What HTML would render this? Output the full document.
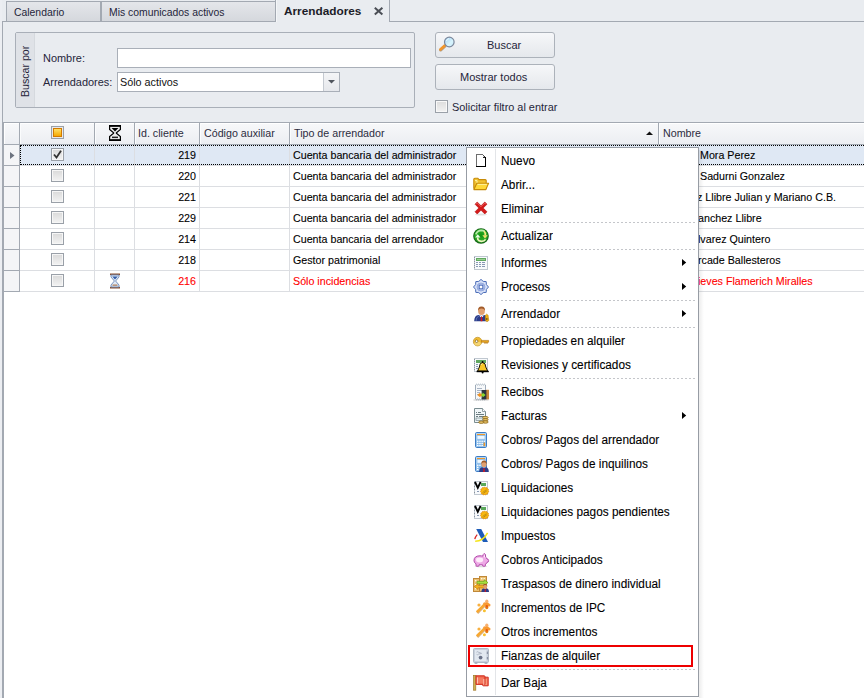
<!DOCTYPE html>
<html><head><meta charset="utf-8">
<style>
*{box-sizing:border-box;margin:0;padding:0}
html,body{width:864px;height:698px;overflow:hidden}
body{background:#e9ecf0;font-family:"Liberation Sans",sans-serif;font-size:11px;color:#1e1e1e;position:relative}
.a{position:absolute}
.t{position:absolute;white-space:nowrap;line-height:13px}
.h{position:absolute;white-space:nowrap;line-height:13px;font-size:10.7px;color:#2c2c40}
.g{position:absolute;white-space:nowrap;line-height:13px;font-size:10.7px;color:#000;-webkit-text-stroke:0.1px currentColor}
.m{position:absolute;white-space:nowrap;line-height:14px;font-size:12.3px;transform:scaleX(.96);transform-origin:0 0;color:#000;left:501px;-webkit-text-stroke:0.1px #000}
svg{position:absolute;overflow:visible}
</style></head><body>

<div class="a" style="left:0;top:0;width:2px;height:698px;background:#eceef2"></div>
<div class="a" style="left:6px;top:1px;width:95px;height:21px;border:1px solid #a3a9b2;background:linear-gradient(#e4e6ea,#d5d8dd)"></div>
<div class="a" style="left:101px;top:1px;width:175px;height:21px;border:1px solid #a3a9b2;background:linear-gradient(#e4e6ea,#d5d8dd)"></div>
<div class="a" style="left:275px;top:-1px;width:115px;height:23px;border:1px solid #a3a9b2;border-bottom:none;background:#e9ecf0;box-shadow:inset 1px 0 0 #f4f6f8"></div>
<div class="t" style="left:14px;top:6px;font-size:10.4px;color:#25253a">Calendario</div>
<div class="t" style="left:109px;top:6px;font-size:10.4px;color:#25253a">Mis comunicados activos</div>
<div class="t" style="left:284px;top:5px;font-size:11.8px;font-weight:bold;color:#1c1c28">Arrendadores</div>
<svg style="left:374px;top:7px" width="10" height="9" viewBox="0 0 10 9"><path d="M0.8 0.8 L8.4 7.6 M8.4 0.8 L0.8 7.6" stroke="#4a4e55" stroke-width="2"/></svg>
<div class="a" style="left:2px;top:21px;width:1px;height:677px;background:#a3a9b2"></div>
<div class="a" style="left:2px;top:21px;width:274px;height:1px;background:#a3a9b2"></div>
<div class="a" style="left:389px;top:21px;width:475px;height:1px;background:#a3a9b2"></div>
<div class="a" style="left:15px;top:32px;width:400px;height:76px;border:1px solid #a9afb8;border-radius:2px"></div>
<div class="a" style="left:16px;top:33px;width:19px;height:74px;background:#dfe2e7;border-right:1px solid #d5d9de"></div>
<div class="t" style="left:19px;top:97px;font-size:10.6px;transform-origin:0 0;transform:rotate(-90deg);color:#25253a">Buscar por</div>
<div class="t" style="left:43px;top:52px;font-size:10.95px;color:#25253a">Nombre:</div>
<div class="t" style="left:43px;top:76px;font-size:10.95px;color:#25253a">Arrendadores:</div>
<div class="a" style="left:117px;top:48px;width:294px;height:20px;border:1px solid #a9afb8;background:#fff"></div>
<div class="a" style="left:117px;top:72px;width:223px;height:20px;border:1px solid #a9afb8;background:#fff"></div>
<div class="a" style="left:323px;top:73px;width:16px;height:18px;border-left:1px solid #c5cad1;background:linear-gradient(#f4f5f7,#e6e8ec)"></div>
<svg style="left:328px;top:80px" width="8" height="5"><path d="M0 0 H7 L3.5 3.6 Z" fill="#50555d"/></svg>
<div class="t" style="left:120px;top:76px;font-size:10.8px;color:#111">Sólo activos</div>
<div class="a" style="left:435px;top:32px;width:120px;height:26px;border:1px solid #acb2ba;border-radius:3px;background:linear-gradient(#f6f7f9,#e5e8ec)"></div>
<div class="t" style="left:487px;top:39px;font-size:11px;color:#25253a">Buscar</div>
<svg style="left:438px;top:35px" width="18" height="18" viewBox="0 0 18 18">
<defs><linearGradient id="mg" x1="0" y1="0" x2="1" y2="1"><stop offset="0" stop-color="#9ccff4"/><stop offset=".6" stop-color="#d8f4fc"/><stop offset="1" stop-color="#c4e8f8"/></linearGradient></defs>
<line x1="2.6" y1="15" x2="7" y2="11.2" stroke="#7a5020" stroke-width="3" stroke-linecap="round" opacity=".5"/>
<line x1="2.4" y1="14.4" x2="6.8" y2="10.6" stroke="#f2962a" stroke-width="2.6" stroke-linecap="round"/>
<circle cx="11.3" cy="7" r="4.8" fill="url(#mg)" stroke="#7c889c" stroke-width="1.2"/>
<path d="M8.4 6 Q9 4 11 3.6" stroke="#fff" stroke-width="1" fill="none" opacity=".8"/></svg>
<div class="a" style="left:435px;top:64px;width:120px;height:26px;border:1px solid #acb2ba;border-radius:3px;background:linear-gradient(#f6f7f9,#e5e8ec)"></div>
<div class="t" style="left:460px;top:71px;font-size:11px;color:#25253a">Mostrar todos</div>
<div class="a" style="left:435px;top:100px;width:13px;height:13px;border:1px solid #9aa0a8;background:linear-gradient(#dcdcdc,#f2f2f2);box-shadow:inset 0 0 0 1px #f8f8f8"></div>
<div class="t" style="left:452px;top:101px;font-size:10.9px;color:#25253a">Solicitar filtro al entrar</div>
<div class="a" style="left:3px;top:122px;width:861px;height:576px;background:#fff"></div>
<div class="a" style="left:2px;top:122px;width:862px;height:1px;background:#a3a9b2"></div>
<div class="a" style="left:3px;top:122px;width:1px;height:576px;background:#a3a9b2"></div>
<div class="a" style="left:4px;top:123px;width:860px;height:21px;background:linear-gradient(#f7f8fa,#eceef2);box-shadow:inset 1px 1px 0 #fff"></div>
<div class="a" style="left:4px;top:144px;width:860px;height:1px;background:#a3a9b2"></div>
<div class="a" style="left:19px;top:123px;width:1px;height:21px;background:#a3a9b2"></div>
<div class="a" style="left:20px;top:123px;width:1px;height:21px;background:#fbfcfd"></div>
<div class="a" style="left:94px;top:123px;width:1px;height:21px;background:#a3a9b2"></div>
<div class="a" style="left:95px;top:123px;width:1px;height:21px;background:#fbfcfd"></div>
<div class="a" style="left:134px;top:123px;width:1px;height:21px;background:#a3a9b2"></div>
<div class="a" style="left:135px;top:123px;width:1px;height:21px;background:#fbfcfd"></div>
<div class="a" style="left:199px;top:123px;width:1px;height:21px;background:#a3a9b2"></div>
<div class="a" style="left:200px;top:123px;width:1px;height:21px;background:#fbfcfd"></div>
<div class="a" style="left:289px;top:123px;width:1px;height:21px;background:#a3a9b2"></div>
<div class="a" style="left:290px;top:123px;width:1px;height:21px;background:#fbfcfd"></div>
<div class="a" style="left:658px;top:123px;width:1px;height:21px;background:#a3a9b2"></div>
<div class="a" style="left:659px;top:123px;width:1px;height:21px;background:#fbfcfd"></div>
<div class="a" style="left:51px;top:126px;width:13px;height:13px;border:1px solid #9aa0a8;background:#fff;box-shadow:inset 0 0 0 1px #e8e8e8"></div>
<div class="a" style="left:53px;top:128px;width:9px;height:9px;background:linear-gradient(#ffe066,#f5a800);border:1px solid #d27a00"></div>
<svg style="left:109px;top:125px" width="12" height="16" viewBox="0 0 12 16">
<path d="M0.6 1 H11.4 V4.5 L7.4 7.7 V8.3 L11.4 11.5 V15 H0.6 V11.5 L4.6 8.3 V7.7 L0.6 4.5 Z" fill="#ececec" stroke="#000" stroke-width="1.2"/>
<rect x="0" y="0" width="12" height="1.7" fill="#000"/><rect x="0" y="14.3" width="12" height="1.7" fill="#000"/>
<path d="M2.6 3 H9.4 L6 6.4 Z" fill="#000"/><rect x="3" y="11.6" width="6" height="1.5" fill="#222"/></svg>
<div class="h" style="left:138px;top:127px">Id. cliente</div>
<div class="h" style="left:204px;top:127px">Código auxiliar</div>
<div class="h" style="left:294px;top:127px">Tipo de arrendador</div>
<div class="h" style="left:663px;top:127px">Nombre</div>
<svg style="left:646px;top:131px" width="8" height="5"><path d="M0 4 H7 L3.5 0.5 Z" fill="#111"/></svg>
<div class="a" style="left:20px;top:145px;width:844px;height:20px;background:#dfe8f4"></div>
<div class="a" style="left:4px;top:145px;width:15px;height:20px;background:#f4f5f7"></div>
<div class="a" style="left:4px;top:165px;width:16px;height:1px;background:#a3a9b2"></div>
<div class="a" style="left:19px;top:145px;width:1px;height:21px;background:#a3a9b2"></div>
<div class="a" style="left:20px;top:165px;width:844px;height:1px;background:#dcdee2"></div>
<div class="a" style="left:94px;top:145px;width:1px;height:20px;background:#dcdee2"></div>
<div class="a" style="left:134px;top:145px;width:1px;height:20px;background:#dcdee2"></div>
<div class="a" style="left:199px;top:145px;width:1px;height:20px;background:#dcdee2"></div>
<div class="a" style="left:289px;top:145px;width:1px;height:20px;background:#dcdee2"></div>
<div class="a" style="left:658px;top:145px;width:1px;height:20px;background:#dcdee2"></div>
<div class="a" style="left:51px;top:148px;width:13px;height:13px;border:1px solid #9aa0a8;background:linear-gradient(#d9d9d9,#f3f3f3);box-shadow:inset 0 0 0 1px #f6f6f6"></div>
<svg style="left:53px;top:150px" width="9" height="9" viewBox="0 0 9 9"><path d="M1 4.5 L3.5 7.5 L8 0.8" fill="none" stroke="#333" stroke-width="1.8"/></svg>
<div class="g" style="left:135px;width:61px;text-align:right;top:149px;color:#000">219</div>
<div class="g" style="left:293px;top:149px;color:#000">Cuenta bancaria del administrador</div>
<div class="g" style="left:700px;top:149px;color:#000">Mora Perez</div>
<div class="a" style="left:4px;top:166px;width:15px;height:20px;background:#f4f5f7"></div>
<div class="a" style="left:4px;top:186px;width:16px;height:1px;background:#a3a9b2"></div>
<div class="a" style="left:19px;top:166px;width:1px;height:21px;background:#a3a9b2"></div>
<div class="a" style="left:20px;top:186px;width:844px;height:1px;background:#dcdee2"></div>
<div class="a" style="left:94px;top:166px;width:1px;height:20px;background:#dcdee2"></div>
<div class="a" style="left:134px;top:166px;width:1px;height:20px;background:#dcdee2"></div>
<div class="a" style="left:199px;top:166px;width:1px;height:20px;background:#dcdee2"></div>
<div class="a" style="left:289px;top:166px;width:1px;height:20px;background:#dcdee2"></div>
<div class="a" style="left:658px;top:166px;width:1px;height:20px;background:#dcdee2"></div>
<div class="a" style="left:51px;top:169px;width:13px;height:13px;border:1px solid #9aa0a8;background:linear-gradient(#d9d9d9,#f3f3f3);box-shadow:inset 0 0 0 1px #f6f6f6"></div>
<div class="g" style="left:135px;width:61px;text-align:right;top:170px;color:#000">220</div>
<div class="g" style="left:293px;top:170px;color:#000">Cuenta bancaria del administrador</div>
<div class="g" style="left:700px;top:170px;color:#000">Sadurni Gonzalez</div>
<div class="a" style="left:4px;top:187px;width:15px;height:20px;background:#f4f5f7"></div>
<div class="a" style="left:4px;top:207px;width:16px;height:1px;background:#a3a9b2"></div>
<div class="a" style="left:19px;top:187px;width:1px;height:21px;background:#a3a9b2"></div>
<div class="a" style="left:20px;top:207px;width:844px;height:1px;background:#dcdee2"></div>
<div class="a" style="left:94px;top:187px;width:1px;height:20px;background:#dcdee2"></div>
<div class="a" style="left:134px;top:187px;width:1px;height:20px;background:#dcdee2"></div>
<div class="a" style="left:199px;top:187px;width:1px;height:20px;background:#dcdee2"></div>
<div class="a" style="left:289px;top:187px;width:1px;height:20px;background:#dcdee2"></div>
<div class="a" style="left:658px;top:187px;width:1px;height:20px;background:#dcdee2"></div>
<div class="a" style="left:51px;top:190px;width:13px;height:13px;border:1px solid #9aa0a8;background:linear-gradient(#d9d9d9,#f3f3f3);box-shadow:inset 0 0 0 1px #f6f6f6"></div>
<div class="g" style="left:135px;width:61px;text-align:right;top:191px;color:#000">221</div>
<div class="g" style="left:293px;top:191px;color:#000">Cuenta bancaria del administrador</div>
<div class="g" style="left:697px;top:191px;color:#000">z Llibre Julian y Mariano C.B.</div>
<div class="a" style="left:4px;top:208px;width:15px;height:20px;background:#f4f5f7"></div>
<div class="a" style="left:4px;top:228px;width:16px;height:1px;background:#a3a9b2"></div>
<div class="a" style="left:19px;top:208px;width:1px;height:21px;background:#a3a9b2"></div>
<div class="a" style="left:20px;top:228px;width:844px;height:1px;background:#dcdee2"></div>
<div class="a" style="left:94px;top:208px;width:1px;height:20px;background:#dcdee2"></div>
<div class="a" style="left:134px;top:208px;width:1px;height:20px;background:#dcdee2"></div>
<div class="a" style="left:199px;top:208px;width:1px;height:20px;background:#dcdee2"></div>
<div class="a" style="left:289px;top:208px;width:1px;height:20px;background:#dcdee2"></div>
<div class="a" style="left:658px;top:208px;width:1px;height:20px;background:#dcdee2"></div>
<div class="a" style="left:51px;top:211px;width:13px;height:13px;border:1px solid #9aa0a8;background:linear-gradient(#d9d9d9,#f3f3f3);box-shadow:inset 0 0 0 1px #f6f6f6"></div>
<div class="g" style="left:135px;width:61px;text-align:right;top:212px;color:#000">229</div>
<div class="g" style="left:293px;top:212px;color:#000">Cuenta bancaria del administrador</div>
<div class="g" style="left:698px;top:212px;color:#000">anchez Llibre</div>
<div class="a" style="left:4px;top:229px;width:15px;height:20px;background:#f4f5f7"></div>
<div class="a" style="left:4px;top:249px;width:16px;height:1px;background:#a3a9b2"></div>
<div class="a" style="left:19px;top:229px;width:1px;height:21px;background:#a3a9b2"></div>
<div class="a" style="left:20px;top:249px;width:844px;height:1px;background:#dcdee2"></div>
<div class="a" style="left:94px;top:229px;width:1px;height:20px;background:#dcdee2"></div>
<div class="a" style="left:134px;top:229px;width:1px;height:20px;background:#dcdee2"></div>
<div class="a" style="left:199px;top:229px;width:1px;height:20px;background:#dcdee2"></div>
<div class="a" style="left:289px;top:229px;width:1px;height:20px;background:#dcdee2"></div>
<div class="a" style="left:658px;top:229px;width:1px;height:20px;background:#dcdee2"></div>
<div class="a" style="left:51px;top:232px;width:13px;height:13px;border:1px solid #9aa0a8;background:linear-gradient(#d9d9d9,#f3f3f3);box-shadow:inset 0 0 0 1px #f6f6f6"></div>
<div class="g" style="left:135px;width:61px;text-align:right;top:233px;color:#000">214</div>
<div class="g" style="left:293px;top:233px;color:#000">Cuenta bancaria del arrendador</div>
<div class="g" style="left:698px;top:233px;color:#000">lvarez Quintero</div>
<div class="a" style="left:4px;top:250px;width:15px;height:20px;background:#f4f5f7"></div>
<div class="a" style="left:4px;top:270px;width:16px;height:1px;background:#a3a9b2"></div>
<div class="a" style="left:19px;top:250px;width:1px;height:21px;background:#a3a9b2"></div>
<div class="a" style="left:20px;top:270px;width:844px;height:1px;background:#dcdee2"></div>
<div class="a" style="left:94px;top:250px;width:1px;height:20px;background:#dcdee2"></div>
<div class="a" style="left:134px;top:250px;width:1px;height:20px;background:#dcdee2"></div>
<div class="a" style="left:199px;top:250px;width:1px;height:20px;background:#dcdee2"></div>
<div class="a" style="left:289px;top:250px;width:1px;height:20px;background:#dcdee2"></div>
<div class="a" style="left:658px;top:250px;width:1px;height:20px;background:#dcdee2"></div>
<div class="a" style="left:51px;top:253px;width:13px;height:13px;border:1px solid #9aa0a8;background:linear-gradient(#d9d9d9,#f3f3f3);box-shadow:inset 0 0 0 1px #f6f6f6"></div>
<div class="g" style="left:135px;width:61px;text-align:right;top:254px;color:#000">218</div>
<div class="g" style="left:293px;top:254px;color:#000">Gestor patrimonial</div>
<div class="g" style="left:698px;top:254px;color:#000">rcade Ballesteros</div>
<div class="a" style="left:4px;top:271px;width:15px;height:20px;background:#f4f5f7"></div>
<div class="a" style="left:4px;top:291px;width:16px;height:1px;background:#a3a9b2"></div>
<div class="a" style="left:19px;top:271px;width:1px;height:21px;background:#a3a9b2"></div>
<div class="a" style="left:20px;top:291px;width:844px;height:1px;background:#dcdee2"></div>
<div class="a" style="left:94px;top:271px;width:1px;height:20px;background:#dcdee2"></div>
<div class="a" style="left:134px;top:271px;width:1px;height:20px;background:#dcdee2"></div>
<div class="a" style="left:199px;top:271px;width:1px;height:20px;background:#dcdee2"></div>
<div class="a" style="left:289px;top:271px;width:1px;height:20px;background:#dcdee2"></div>
<div class="a" style="left:658px;top:271px;width:1px;height:20px;background:#dcdee2"></div>
<div class="a" style="left:51px;top:274px;width:13px;height:13px;border:1px solid #9aa0a8;background:linear-gradient(#d9d9d9,#f3f3f3);box-shadow:inset 0 0 0 1px #f6f6f6"></div>
<div class="g" style="left:135px;width:61px;text-align:right;top:275px;color:#ff0000">216</div>
<div class="g" style="left:293px;top:275px;color:#ff0000">Sólo incidencias</div>
<div class="g" style="left:698px;top:275px;color:#ff0000">ieves Flamerich Miralles</div>
<svg style="left:109px;top:273px" width="12" height="16" viewBox="0 0 12 16">
<rect x="1" y="0.5" width="10" height="1.6" fill="#8a5030"/><rect x="1" y="13.9" width="10" height="1.6" fill="#8a5030"/>
<path d="M2 2 H10 V4 L6.6 8 L10 12 V14 H2 V12 L5.4 8 L2 4 Z" fill="#dfe9f5" stroke="#6c88b8" stroke-width="0.9"/>
<path d="M3.2 3.5 H8.8 L6 6.6 Z" fill="#2f5aa8"/><rect x="3.5" y="11.5" width="5" height="1.3" fill="#b08060"/></svg>
<div class="a" style="left:20px;top:145px;width:844px;height:20px;border:1px dotted #000;border-right:none"></div>
<svg style="left:10px;top:152px" width="5" height="8"><path d="M0 0 L4.5 3.5 L0 7 Z" fill="#6d7480"/></svg>
<div class="a" style="left:699px;top:150px;width:5px;height:549px;background:linear-gradient(90deg,rgba(0,0,0,.07),rgba(0,0,0,0))"></div>
<div class="a" style="left:466px;top:147px;width:233px;height:550px;border:1px solid #979ca4;background:#fff"></div>
<div class="a" style="left:495px;top:149px;width:1px;height:546px;background:#e3e5e8"></div>
<div class="m" style="top:154px">Nuevo</div>
<svg style="left:473px;top:153px" width="16" height="16" viewBox="0 0 16 16"><g shape-rendering="crispEdges">
<rect x="3" y="1" width="10" height="13" fill="#fff"/>
<rect x="3" y="1" width="1" height="13" fill="#6e6e6e"/>
<rect x="3" y="1" width="7" height="1" fill="#6e6e6e"/>
<rect x="12" y="4" width="1.3" height="10" fill="#000"/>
<rect x="3" y="13" width="10.3" height="1.4" fill="#000"/>
<rect x="10" y="2" width="1" height="1" fill="#555"/><rect x="11" y="3" width="1" height="1" fill="#333"/>
<rect x="10" y="3" width="1" height="1" fill="#d8d8d8"/>
<rect x="10" y="4" width="2" height="1" fill="#222"/>
</g></svg>
<div class="m" style="top:178px">Abrir...</div>
<svg style="left:473px;top:177px" width="16" height="16" viewBox="0 0 16 16"><path d="M0.8 2.2 Q0.8 1.2 1.8 1.2 H4.8 L6 2.6 H12.2 Q13.2 2.6 13.2 3.6 V11.8 H1.8 Q0.8 11.8 0.8 10.8Z" fill="#f2c230" stroke="#c68a08" stroke-width="1.1"/>
<path d="M2 3.6 H4 V11" stroke="#fff4a8" stroke-width="1" fill="none"/>
<path d="M3.8 6.2 H15.6 L12.8 12.6 H0.9Z" fill="#ffd838" stroke="#c68a08" stroke-width="1.1" stroke-linejoin="round"/>
<path d="M4.6 7.4 H13.8" stroke="#fff2a0" stroke-width="1"/></svg>
<div class="m" style="top:202px">Eliminar</div>
<svg style="left:473px;top:201px" width="16" height="16" viewBox="0 0 16 16"><ellipse cx="8" cy="13.6" rx="6" ry="1" fill="#000" opacity=".12"/>
<path d="M2 3.2 L4.2 1 L8 4.8 L11.8 1 L14 3.2 L10.2 7 L14 10.8 L11.8 13 L8 9.2 L4.2 13 L2 10.8 L5.8 7Z" fill="#d41a1a" stroke="#b01010" stroke-width=".6"/>
<path d="M3 3.2 L4.2 2 L8 5.8 L11.8 2 L13 3.2" stroke="#f07070" stroke-width=".9" fill="none" opacity=".8"/></svg>
<div class="a" style="left:501px;top:222px;width:195px;height:1px;background:repeating-linear-gradient(90deg,#c4c6ca 0 2px,transparent 2px 4px)"></div>
<div class="m" style="top:229px">Actualizar</div>
<svg style="left:473px;top:228px" width="16" height="16" viewBox="0 0 16 16"><defs><radialGradient id="rg" cx="50%" cy="45%" r="55%"><stop offset="0" stop-color="#129412"/><stop offset=".75" stop-color="#32b02a"/><stop offset="1" stop-color="#1a7a1a"/></radialGradient></defs>
<circle cx="8" cy="8" r="7.8" fill="#0f5f10"/>
<circle cx="8" cy="8" r="7" fill="url(#rg)"/>
<path d="M2.8 6.4 Q4.2 2.6 8.6 2.4 Q10.6 2.4 11.6 3.6" fill="none" stroke="#c8f0b8" stroke-width="1.6" opacity=".9"/>
<path d="M11 3.2 Q12.6 4.6 12.2 7.4" fill="none" stroke="#f4e880" stroke-width="1.6"/>
<path d="M9.4 7.2 L14.6 7.2 L12 10.4Z" fill="#f8e070"/>
<path d="M4.8 9.4 V11.4 Q5.6 13.2 8.4 13.4 Q11.4 13.4 12.6 11.4" fill="none" stroke="#f0f4c0" stroke-width="1.6"/>
<path d="M2.2 9.6 L7.4 9.6 L4.8 6.2Z" fill="#eefce8"/></svg>
<div class="a" style="left:501px;top:249px;width:195px;height:1px;background:repeating-linear-gradient(90deg,#c4c6ca 0 2px,transparent 2px 4px)"></div>
<div class="m" style="top:256px">Informes</div>
<svg style="left:473px;top:255px" width="16" height="16" viewBox="0 0 16 16"><g shape-rendering="crispEdges">
<rect x="1" y="1" width="14" height="14" fill="#c0c8d0"/>
<rect x="2" y="2" width="12" height="12" fill="#f8fafc"/>
<rect x="1" y="2" width="1" height="1" fill="#8a929c"/><rect x="1" y="4" width="1" height="1" fill="#8a929c"/><rect x="1" y="6" width="1" height="1" fill="#8a929c"/><rect x="1" y="8" width="1" height="1" fill="#8a929c"/><rect x="1" y="10" width="1" height="1" fill="#8a929c"/><rect x="1" y="12" width="1" height="1" fill="#8a929c"/>
<rect x="3" y="3" width="10" height="3" fill="#60a860"/><rect x="4" y="4" width="8" height="1" fill="#9ad090"/>
<rect x="3" y="7" width="2" height="1" fill="#8898b4"/><rect x="6" y="7" width="2" height="1" fill="#8898b4"/><rect x="9" y="7" width="3" height="1" fill="#8898b4"/>
<rect x="3" y="9" width="2" height="1" fill="#8898b4"/><rect x="6" y="9" width="2" height="1" fill="#8898b4"/><rect x="9" y="9" width="3" height="1" fill="#8898b4"/>
<rect x="3" y="11" width="2" height="1" fill="#8898b4"/><rect x="6" y="11" width="2" height="1" fill="#8898b4"/><rect x="9" y="11" width="3" height="1" fill="#8898b4"/>
</g></svg>
<svg style="left:682px;top:259px" width="5" height="8"><path d="M0 0 L4.2 3.5 L0 7 Z" fill="#000"/></svg>
<div class="m" style="top:280px">Procesos</div>
<svg style="left:473px;top:279px" width="16" height="16" viewBox="0 0 16 16"><path d="M8 0.4 L10.2 2.4 L13.2 2.6 L13.4 5.6 L15.5 8 L13.4 10.4 L13.2 13.4 L10.2 13.6 L8 15.6 L5.8 13.6 L2.8 13.4 L2.6 10.4 L0.5 8 L2.6 5.6 L2.8 2.6 L5.8 2.4Z" fill="#d8e2f8" stroke="#4a6cb8" stroke-width="1"/>
<circle cx="8" cy="8" r="4" fill="#b8c8ee" stroke="#8aa0d8" stroke-width=".8"/>
<rect x="6.2" y="6.2" width="3.6" height="3.6" fill="#fff" stroke="#4a6cb8" stroke-width="1"/></svg>
<svg style="left:682px;top:283px" width="5" height="8"><path d="M0 0 L4.2 3.5 L0 7 Z" fill="#000"/></svg>
<div class="a" style="left:501px;top:300px;width:195px;height:1px;background:repeating-linear-gradient(90deg,#c4c6ca 0 2px,transparent 2px 4px)"></div>
<div class="m" style="top:307px">Arrendador</div>
<svg style="left:473px;top:306px" width="16" height="16" viewBox="0 0 16 16"><path d="M1.2 15.2 Q1.2 9.6 5.5 9 L8.5 10 L11.5 9 Q14 9.4 15 12 V15.2Z" fill="#2c3c88"/>
<path d="M3 15 Q3 11 6 10" stroke="#5a70b8" stroke-width="1" fill="none"/>
<path d="M6.5 9.2 L8.5 10.5 L10.5 9.2 L10 10.8 L8.5 11.5 L7 10.8Z" fill="#fff"/>
<path d="M8 10.6 H9 L9.4 15.2 H7.6Z" fill="#e01818"/>
<ellipse cx="8.5" cy="5" rx="3.4" ry="4" fill="#e0a070"/>
<path d="M5 5 Q4.6 0.6 8.5 0.4 Q12.4 0.6 12 5 Q11.6 2.4 8.5 2.4 Q5.4 2.4 5 5Z" fill="#a05a28"/>
<path d="M13.5 8.2 Q15.8 8.8 15.2 11 L15.8 14.5 L14 15.6 L12.6 14.6 L12.4 11 Q11.8 9 13.5 8.2Z" fill="#f0b418" stroke="#c88a08" stroke-width=".7"/>
<circle cx="13.8" cy="13" r=".9" fill="#7a5a10"/></svg>
<svg style="left:682px;top:310px" width="5" height="8"><path d="M0 0 L4.2 3.5 L0 7 Z" fill="#000"/></svg>
<div class="a" style="left:501px;top:327px;width:195px;height:1px;background:repeating-linear-gradient(90deg,#c4c6ca 0 2px,transparent 2px 4px)"></div>
<div class="m" style="top:334px">Propiedades en alquiler</div>
<svg style="left:473px;top:333px" width="16" height="16" viewBox="0 0 16 16"><ellipse cx="4.6" cy="8.6" rx="4.2" ry="4.3" fill="#f2bc30" stroke="#caa040" stroke-width=".9"/>
<ellipse cx="4.6" cy="10.5" rx="3.2" ry="2" fill="#f8e8a0" opacity=".6"/>
<circle cx="3.6" cy="8.2" r="1.3" fill="#fff" stroke="#7a5a20" stroke-width=".7"/>
<path d="M8.4 7.4 H15.6 V9.2 H14.6 V10.2 H13.4 V9.2 H12.6 V10.2 H11.4 V9.2 H8.4Z" fill="#e8a820" stroke="#b07010" stroke-width=".6"/></svg>
<div class="m" style="top:358px">Revisiones y certificados</div>
<svg style="left:473px;top:357px" width="16" height="16" viewBox="0 0 16 16"><g shape-rendering="crispEdges">
<rect x="1" y="1" width="14" height="14" fill="#c0c8d0"/>
<rect x="2" y="2" width="12" height="12" fill="#f8fafc"/>
<rect x="1" y="2" width="1" height="1" fill="#8a929c"/><rect x="1" y="4" width="1" height="1" fill="#8a929c"/><rect x="1" y="6" width="1" height="1" fill="#8a929c"/><rect x="1" y="8" width="1" height="1" fill="#8a929c"/><rect x="1" y="10" width="1" height="1" fill="#8a929c"/><rect x="1" y="12" width="1" height="1" fill="#8a929c"/>
<rect x="3" y="3" width="10" height="3" fill="#60a860"/>
<rect x="3" y="7" width="2" height="1" fill="#8898b4"/><rect x="3" y="9" width="2" height="1" fill="#8898b4"/><rect x="3" y="11" width="2" height="1" fill="#8898b4"/>
</g>
<path d="M9.5 5.6 Q6.4 5.8 6.4 10 L4.6 14 H14.6 L12.8 10 Q12.8 5.8 9.6 5.6Z" fill="#f8c828" stroke="#000" stroke-width=".9"/>
<path d="M8.2 8 Q8.2 6.8 9.4 6.6" stroke="#fff0a0" stroke-width="1" fill="none"/>
<rect x="3.6" y="13.8" width="12.2" height="1.4" fill="#000"/>
<circle cx="9.6" cy="15.4" r="1" fill="#000"/><circle cx="9.6" cy="5" r=".9" fill="#000"/></svg>
<div class="a" style="left:501px;top:378px;width:195px;height:1px;background:repeating-linear-gradient(90deg,#c4c6ca 0 2px,transparent 2px 4px)"></div>
<div class="m" style="top:385px">Recibos</div>
<svg style="left:473px;top:384px" width="16" height="16" viewBox="0 0 16 16"><path d="M2.5 1 L3.5 0.2 L4.5 1 L5.5 0.2 L6.5 1 L7.5 0.2 L8.5 1 L9.5 0.2 L10.5 1 L11.5 0.2 L12.5 1 V15 L11.5 15.8 L10.5 15 L9.5 15.8 L8.5 15 L7.5 15.8 L6.5 15 L5.5 15.8 L4.5 15 L3.5 15.8 L2.5 15Z" fill="#f6f8fa" stroke="#8898a8" stroke-width=".8"/>
<path d="M4 4.5h5M4 6.5h6M4 8.5h3M4 10.5h3" stroke="#a8b4c4" stroke-width="1"/>
<rect x="13" y="5.8" width="3" height="9.6" fill="#c8843c"/>
<rect x="8.6" y="6" width="4.8" height="9.4" fill="#2c3440"/>
<path d="M4.2 11 L7.4 8.4 V9.8 H9 V12.2 H7.4 V13.6Z" fill="#f09020"/>
<path d="M12.6 11 L9.6 8.4 V9.8 H8.6 V12.2 H9.6 V13.6Z" fill="#8ad830"/>
<rect x="0.5" y="15.6" width="15" height=".8" fill="#000" opacity=".25"/></svg>
<div class="m" style="top:409px">Facturas</div>
<svg style="left:473px;top:408px" width="16" height="16" viewBox="0 0 16 16"><path d="M1.5 0.5 H9.5 L12.5 3.5 V14.5 H1.5Z" fill="#f0f6f8" stroke="#7a8c90" stroke-width="1"/>
<path d="M9.5 0.5 V3.5 H12.5" fill="#fff" stroke="#7a8c90" stroke-width=".8"/>
<path d="M3 4.5h1M5 4.5h3M3 6.5h8M3 8.5h2M6 8.5h5" stroke="#6a7c80" stroke-width="1"/>
<rect x="3" y="10" width="7" height="2.6" fill="#e4eef0" stroke="#7a8c90" stroke-width=".7"/>
<ellipse cx="12.4" cy="9.6" rx="2.8" ry="1.2" fill="#e8c468" stroke="#8a6418" stroke-width=".8"/>
<ellipse cx="12.4" cy="11.8" rx="2.8" ry="1.2" fill="#e8c468" stroke="#8a6418" stroke-width=".8"/>
<ellipse cx="12.4" cy="14" rx="2.8" ry="1.2" fill="#e8c468" stroke="#8a6418" stroke-width=".8"/>
<ellipse cx="8.2" cy="14.2" rx="2.6" ry="1.2" fill="#e8c468" stroke="#8a6418" stroke-width=".8"/></svg>
<svg style="left:682px;top:412px" width="5" height="8"><path d="M0 0 L4.2 3.5 L0 7 Z" fill="#000"/></svg>
<div class="m" style="top:433px">Cobros/ Pagos del arrendador</div>
<svg style="left:473px;top:432px" width="16" height="16" viewBox="0 0 16 16"><rect x="2.5" y="0.5" width="11" height="15" rx="1.2" fill="#b4d6f4" stroke="#3c7cc4" stroke-width="1"/>
<rect x="3.5" y="7.8" width="9" height="6.8" fill="#7cb4e8"/>
<rect x="4" y="2" width="8" height="1.2" fill="#f09828"/>
<rect x="4" y="3.6" width="8" height="3.6" fill="#eef8ff" stroke="#7aaee0" stroke-width=".6"/>
<g fill="#fff"><rect x="4" y="8.6" width="1.5" height="1.3"/><rect x="6.2" y="8.6" width="1.5" height="1.3"/><rect x="8.4" y="8.6" width="1.5" height="1.3"/><rect x="10.6" y="8.6" width="1.5" height="1.3"/>
<rect x="4" y="10.7" width="1.5" height="1.3"/><rect x="6.2" y="10.7" width="1.5" height="1.3"/><rect x="8.4" y="10.7" width="1.5" height="1.3"/>
<rect x="4" y="12.8" width="1.5" height="1.3"/><rect x="6.2" y="12.8" width="1.5" height="1.3"/><rect x="8.4" y="12.8" width="1.5" height="1.3"/></g>
<rect x="10.6" y="10.6" width="1.5" height="3.5" fill="#f09828"/></svg>
<div class="m" style="top:457px">Cobros/ Pagos de inquilinos</div>
<svg style="left:473px;top:456px" width="16" height="16" viewBox="0 0 16 16"><rect x="2.5" y="0.5" width="11" height="15" rx="1.2" fill="#b4d6f4" stroke="#3c7cc4" stroke-width="1"/>
<rect x="3.5" y="7.8" width="9" height="6.8" fill="#7cb4e8"/>
<rect x="4" y="2" width="8" height="1.2" fill="#f09828"/>
<rect x="4" y="3.6" width="8" height="3.6" fill="#eef8ff" stroke="#7aaee0" stroke-width=".6"/>
<g fill="#fff"><rect x="4" y="8.6" width="1.5" height="1.3"/><rect x="6.2" y="8.6" width="1.5" height="1.3"/><rect x="4" y="10.7" width="1.5" height="1.3"/><rect x="4" y="12.8" width="1.5" height="1.3"/></g>
<path d="M6.2 16 Q6.2 11.6 9 11.2 L11 12 L13 11.2 Q15.8 11.6 15.8 16Z" fill="#2c3c88"/>
<path d="M10.5 12 H11.5 L11.8 16 H10.2Z" fill="#e01818"/>
<ellipse cx="11" cy="8.2" rx="2.6" ry="3" fill="#e0a070"/>
<path d="M8.4 8.2 Q8 4.6 11 4.6 Q14 4.6 13.6 8.2 Q13.2 6.2 11 6.2 Q8.8 6.2 8.4 8.2Z" fill="#a05a28"/></svg>
<div class="m" style="top:481px">Liquidaciones</div>
<svg style="left:473px;top:480px" width="16" height="16" viewBox="0 0 16 16"><g shape-rendering="crispEdges">
<rect x="1" y="1" width="14" height="14" fill="#c0c8d0"/>
<rect x="2" y="2" width="12" height="12" fill="#f8fafc"/>
<rect x="1" y="3" width="1" height="1" fill="#8a929c"/><rect x="1" y="6" width="1" height="1" fill="#8a929c"/><rect x="1" y="9" width="1" height="1" fill="#8a929c"/><rect x="1" y="12" width="1" height="1" fill="#8a929c"/>
<rect x="8" y="3" width="5" height="3" fill="#5aa85a"/>
<rect x="4" y="11" width="2" height="1" fill="#8898b4"/>
</g>
<path d="M2 1.8 L4.8 7.8 L7.6 1.8" fill="none" stroke="#000" stroke-width="1.9"/>
<path d="M11.6 7 L12.6 7.8 L13.9 7.6 L14.3 8.8 L15.5 9.4 L15.2 10.6 L15.8 11.8 L14.8 12.6 L14.7 13.9 L13.4 14 L12.6 15 L11.5 14.4 L10.3 15 L9.6 13.9 L8.3 13.7 L8.3 12.4 L7.4 11.5 L8.1 10.4 L7.8 9.2 L9 8.7 L9.5 7.5 L10.8 7.8Z" fill="#f8b810" stroke="#e08808" stroke-width=".7"/>
<path d="M9.6 12.6 L13.4 9.6 M10.4 13.4 L14 10.6" stroke="#b08010" stroke-width=".8"/></svg>
<div class="m" style="top:505px">Liquidaciones pagos pendientes</div>
<svg style="left:473px;top:504px" width="16" height="16" viewBox="0 0 16 16"><g shape-rendering="crispEdges">
<rect x="1" y="1" width="14" height="14" fill="#c0c8d0"/>
<rect x="2" y="2" width="12" height="12" fill="#f8fafc"/>
<rect x="1" y="3" width="1" height="1" fill="#8a929c"/><rect x="1" y="6" width="1" height="1" fill="#8a929c"/><rect x="1" y="9" width="1" height="1" fill="#8a929c"/><rect x="1" y="12" width="1" height="1" fill="#8a929c"/>
<rect x="8" y="3" width="5" height="3" fill="#5aa85a"/>
<rect x="4" y="11" width="2" height="1" fill="#8898b4"/>
</g>
<path d="M2 1.8 L4.8 7.8 L7.6 1.8" fill="none" stroke="#000" stroke-width="1.9"/>
<path d="M11.6 7 L12.6 7.8 L13.9 7.6 L14.3 8.8 L15.5 9.4 L15.2 10.6 L15.8 11.8 L14.8 12.6 L14.7 13.9 L13.4 14 L12.6 15 L11.5 14.4 L10.3 15 L9.6 13.9 L8.3 13.7 L8.3 12.4 L7.4 11.5 L8.1 10.4 L7.8 9.2 L9 8.7 L9.5 7.5 L10.8 7.8Z" fill="#f8b810" stroke="#e08808" stroke-width=".7"/>
<path d="M9.6 12.6 L13.4 9.6 M10.4 13.4 L14 10.6" stroke="#b08010" stroke-width=".8"/></svg>
<div class="m" style="top:529px">Impuestos</div>
<svg style="left:473px;top:528px" width="16" height="16" viewBox="0 0 16 16"><path d="M3.2 1 H8.2 L15 14 H10Z" fill="#1e5cb8"/>
<path d="M4.2 6.6 Q2.4 8.6 1.8 11.2" stroke="#d82828" stroke-width="1.3" fill="none"/>
<path d="M2.2 13.2 Q10.2 13 14.6 4.8" stroke="#f4e418" stroke-width="1.5" fill="none"/></svg>
<div class="m" style="top:553px">Cobros Anticipados</div>
<svg style="left:473px;top:552px" width="16" height="16" viewBox="0 0 16 16"><ellipse cx="8" cy="14.6" rx="6.5" ry=".7" fill="#000" opacity=".14"/>
<path d="M1 8.6 Q1 3.8 7 3.8 Q8.6 3.8 9.6 4.2 Q10 1.6 11.6 1.6 Q12.8 1.8 12.6 5 Q13.8 5.8 14 7 Q15.6 7 15.6 8.6 Q15.6 10.4 14 10.4 Q13.6 11.8 12.4 12.2 V13.8 Q12.4 14.2 11.8 14.2 H10.2 Q9.6 14.2 9.6 13.6 V12.8 H6 V13.6 Q6 14.2 5.4 14.2 H3.6 Q3 14.2 3 13.6 V11.8 Q1 10.8 1 8.6Z" fill="#eeaae6" stroke="#b048a8" stroke-width="1"/>
<ellipse cx="6.6" cy="8" rx="3.6" ry="2.4" fill="#fff4fc" opacity=".9"/>
<path d="M10.8 2.6 Q11.8 3 11.6 5.4" stroke="#fff0fc" stroke-width="1" fill="none"/></svg>
<div class="m" style="top:577px">Traspasos de dinero individual</div>
<svg style="left:473px;top:576px" width="16" height="16" viewBox="0 0 16 16"><rect x="0.5" y="2.5" width="7" height="13" fill="#ecc070" stroke="#c08838" stroke-width="1"/>
<rect x="6.5" y="0.5" width="7" height="15" fill="#ecc070" stroke="#c08838" stroke-width="1"/>
<g fill="#fff8e0"><rect x="2" y="4" width="1.4" height="1.4"/><rect x="2" y="8" width="1.4" height="1.4"/><rect x="2" y="12" width="1.4" height="1.4"/><rect x="8" y="2" width="1.4" height="1.4"/><rect x="10.5" y="2" width="1.4" height="1.4"/></g>
<path d="M4 5.4 H11.2 V3.8 L15 6.6 L11.2 9.4 V7.8 H4Z" fill="#a8e040" stroke="#68a818" stroke-width=".7"/>
<path d="M12 9.4 H5 V7.8 L1.2 10.6 L5 13.4 V11.8 H12Z" fill="#f4b020" stroke="#c88010" stroke-width=".7"/>
<path d="M8.4 16 Q8.4 12.8 10.6 12.4 L12.2 13 L13.8 12.4 Q16 12.8 16 16Z" fill="#2c3c88"/>
<path d="M11.8 13 H12.6 L12.8 16 H11.6Z" fill="#e01818"/>
<ellipse cx="12.2" cy="10.4" rx="2" ry="2.3" fill="#e0a070"/>
<path d="M10.2 10.4 Q10 7.8 12.2 7.8 Q14.4 7.8 14.2 10.4 Q13.8 9 12.2 9 Q10.6 9 10.2 10.4Z" fill="#a05a28"/></svg>
<div class="m" style="top:601px">Incrementos de IPC</div>
<svg style="left:473px;top:600px" width="16" height="16" viewBox="0 0 16 16"><g transform="translate(0.8,-1.4)"><path d="M4.4 13.2 L10.6 7" stroke="#c07010" stroke-width="3" stroke-linecap="square" opacity=".55"/>
<path d="M4 12.6 L10.4 6.2" stroke="#f8a830" stroke-width="2.6" stroke-linecap="square"/>
<circle cx="13" cy="2.6" r="1.6" fill="#f8b070"/>
<circle cx="15.2" cy="6.4" r="1.5" fill="#f89830"/>
<circle cx="10.8" cy="5.2" r="1.5" fill="#f8a040"/>
<circle cx="13" cy="9" r="1.6" fill="#e88010"/>
<circle cx="13" cy="6" r="2.4" fill="#f89830"/>
<circle cx="13" cy="7.6" r="1.2" fill="#e85a10"/>
<circle cx="5.2" cy="6.4" r="1.6" fill="#f8b040"/>
<circle cx="10.6" cy="12.2" r="1.5" fill="#f8c030"/></g></svg>
<div class="m" style="top:625px">Otros incrementos</div>
<svg style="left:473px;top:624px" width="16" height="16" viewBox="0 0 16 16"><g transform="translate(0.8,-1.4)"><path d="M4.4 13.2 L10.6 7" stroke="#c07010" stroke-width="3" stroke-linecap="square" opacity=".55"/>
<path d="M4 12.6 L10.4 6.2" stroke="#f8a830" stroke-width="2.6" stroke-linecap="square"/>
<circle cx="13" cy="2.6" r="1.6" fill="#f8b070"/>
<circle cx="15.2" cy="6.4" r="1.5" fill="#f89830"/>
<circle cx="10.8" cy="5.2" r="1.5" fill="#f8a040"/>
<circle cx="13" cy="9" r="1.6" fill="#e88010"/>
<circle cx="13" cy="6" r="2.4" fill="#f89830"/>
<circle cx="13" cy="7.6" r="1.2" fill="#e85a10"/>
<circle cx="5.2" cy="6.4" r="1.6" fill="#f8b040"/>
<circle cx="10.6" cy="12.2" r="1.5" fill="#f8c030"/></g></svg>
<div class="m" style="top:649px">Fianzas de alquiler</div>
<svg style="left:473px;top:648px" width="16" height="16" viewBox="0 0 16 16"><rect x="0.5" y="0.5" width="15" height="14" rx="1" fill="#c8d0dc" stroke="#b0b8c4" stroke-width="1"/>
<rect x="2" y="2" width="11.5" height="11" fill="#e2e8f0"/>
<path d="M3.5 4.2 Q4.4 3.2 5.4 4.2 L8.6 5.4 M3.6 6.4 Q4.4 7.2 5.4 6.2 L8.6 5.4" stroke="#a8b0c0" stroke-width=".9" fill="none"/>
<circle cx="7.6" cy="9.6" r="1.9" fill="#6a7288"/>
<rect x="13.8" y="3.6" width="1.2" height="2.4" fill="#8a92a4"/><rect x="13.8" y="9" width="1.2" height="2.4" fill="#8a92a4"/>
<rect x="1.6" y="14.6" width="2.8" height="1.2" fill="#a0a8b8"/><rect x="11.6" y="14.6" width="2.8" height="1.2" fill="#a0a8b8"/></svg>
<div class="a" style="left:468px;top:645px;width:225px;height:22px;border:2px solid #ee0000"></div>
<div class="a" style="left:501px;top:669px;width:195px;height:1px;background:repeating-linear-gradient(90deg,#c4c6ca 0 2px,transparent 2px 4px)"></div>
<div class="m" style="top:676px">Dar Baja</div>
<svg style="left:473px;top:675px" width="16" height="16" viewBox="0 0 16 16"><rect x="0.6" y="0.4" width="2.2" height="14.8" fill="#d0b050" stroke="#a07828" stroke-width=".7"/>
<path d="M9.6 2.2 H15.2 V10.8 H10.4 Q9.6 10.8 9.6 10Z" fill="#f47058" stroke="#d03020" stroke-width="1"/>
<rect x="11" y="4" width="3" height="6" fill="#f89878"/>
<path d="M3 0.8 H11.2 Q12 0.8 12 1.6 V9.4 H3Z" fill="#f06048" stroke="#d03020" stroke-width="1"/>
<rect x="4.2" y="2.4" width="6.4" height="6" fill="#f47a60"/>
<path d="M4.4 2.4 V8.6" stroke="#ffd0c0" stroke-width="1"/><path d="M10.8 4 V10" stroke="#ffd0c0" stroke-width=".9"/></svg>
</body></html>
